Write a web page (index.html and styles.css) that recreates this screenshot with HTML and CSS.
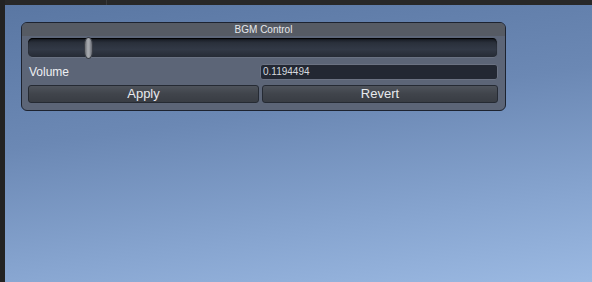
FILE: index.html
```html
<!DOCTYPE html>
<html>
<head>
<meta charset="utf-8">
<link rel="stylesheet" href="styles.css">
</head>
<body>
<div class="app">
  <div class="left-strip"></div>
  <div class="main">
    <div class="topbar"><div class="tab"></div><div class="tab2"></div></div>
    <div class="scene">
      <div class="panel">
        <div class="panel-title">BGM Control</div>
        <div class="panel-body">
          <div class="slider"><div class="thumb"></div></div>
          <div class="row">
            <span class="label">Volume</span>
            <div class="field">0.1194494</div>
          </div>
          <div class="buttons">
            <div class="btn apply">Apply</div>
            <div class="btn revert">Revert</div>
          </div>
        </div>
      </div>
    </div>
  </div>
</div>
</body>
</html>
```
FILE: styles.css
```css
html, body {
  margin: 0;
  padding: 0;
  width: 592px;
  height: 282px;
  overflow: hidden;
  font-family: "Liberation Sans", Arial, sans-serif;
}
.app {
  display: flex;
  width: 592px;
  height: 282px;
}
.left-strip {
  width: 5px;
  background: #232323;
  flex: none;
}
.main {
  flex: 1;
  display: flex;
  flex-direction: column;
}
.topbar {
  height: 5px;
  background: #282828;
  display: flex;
  flex: none;
}
.tab {
  width: 101px;
  border-right: 1px solid #3a3a3a;
}
.scene {
  flex: 1;
  background: linear-gradient(172deg, #5a77a3 0%, #6b88b4 40%, #87a5d0 75%, #9bb9e2 100%);
  padding: 17px 0 0 16px;
}
.panel {
  width: 483px;
  border: 1px solid #1d2330;
  border-radius: 6px;
  background: #5c6577;
  overflow: hidden;
}
.panel-title {
  height: 13px;
  background: #565b64;
  color: #e6e8ec;
  font-size: 10px;
  line-height: 13px;
  text-align: center;
}
.panel-body {
  padding: 2px 7px 7px 6px;
  display: flex;
  flex-direction: column;
}
.slider {
  position: relative;
  height: 20px;
  box-sizing: border-box;
  border-radius: 5px;
  background: linear-gradient(#12161d 0%, #2a303b 25%, #323946 60%, #262b35 100%);
  border-bottom: 1px solid #6a7282;
  border-right: 1px solid #5a6272;
  box-shadow: inset 0 1px 1px #000;
}
.thumb {
  position: absolute;
  left: 56px;
  top: -1px;
  width: 9px;
  height: 22px;
  border-radius: 50% / 35%;
  background: linear-gradient(90deg, #6a6d72 0%, #a8abb0 40%, #a2a5aa 60%, #666972 100%);
  border: 1px solid #3a3e46;
  box-sizing: border-box;
}
.row {
  display: flex;
  align-items: center;
  justify-content: space-between;
  margin-top: 6px;
  height: 16px;
}
.label {
  color: #eef0f3;
  font-size: 12px;
  padding-left: 1px;
}
.field {
  width: 238px;
  height: 16px;
  box-sizing: border-box;
  background: #232833;
  border: 1px solid #6b7282;
  border-radius: 3px;
  color: #d5d8de;
  font-size: 10px;
  line-height: 14px;
  padding-left: 2px;
}
.buttons {
  display: flex;
  gap: 3px;
  margin-top: 5px;
}
.btn {
  height: 18px;
  box-sizing: border-box;
  border: 1px solid #252a33;
  border-radius: 3px;
  background: linear-gradient(#4e535b 0%, #40444b 50%, #393d44 100%);
  color: #e8eaee;
  font-size: 13px;
  line-height: 16px;
  text-align: center;
}
.apply { width: 231px; }
.revert { width: 236px; }
```
